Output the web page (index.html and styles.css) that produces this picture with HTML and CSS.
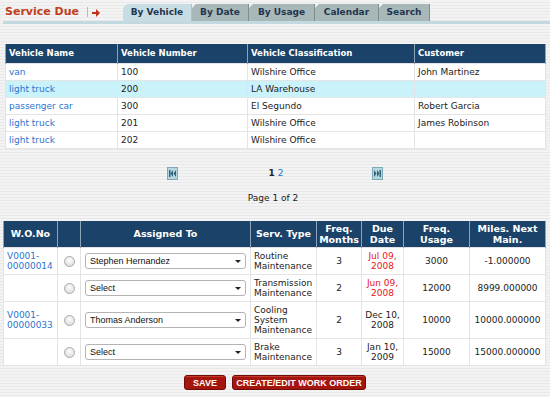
FILE: index.html
```html
<!DOCTYPE html>
<html lang="en">

<head>
  <meta charset="UTF-8">
  <title>Service Due</title>
  <link rel="stylesheet" href="styles.css">
</head>

<body>
  <div class="topbar">
    <div class="title">Service Due</div>
    <div class="sep"></div>
    <svg class="go" width="8" height="8" viewBox="0 0 8 8"><path d="M0 3h4V0l4 4-4 4V5H0z" fill="#c0301a"/></svg>
    <div class="tabs">
      <div class="tab active" style="width:69px">By Vehicle</div>
      <div class="tab" style="width:57px">By Date</div>
      <div class="tab" style="width:66px">By Usage</div>
      <div class="tab" style="width:64px">Calendar</div>
      <div class="tab" style="width:51px">Search</div>
    </div>
  </div>

  <table class="grid vehicles">
    <colgroup>
      <col style="width:112px"><col style="width:130px"><col style="width:167px"><col style="width:131px">
    </colgroup>
    <tr><th>Vehicle Name</th><th>Vehicle Number</th><th>Vehicle Classification</th><th>Customer</th></tr>
    <tr><td><a>van</a></td><td>100</td><td>Wilshire Office</td><td>John Martinez</td></tr>
    <tr class="sel"><td><a>light truck</a></td><td>200</td><td>LA Warehouse</td><td></td></tr>
    <tr><td><a>passenger car</a></td><td>300</td><td>El Segundo</td><td>Robert Garcia</td></tr>
    <tr><td><a>light truck</a></td><td>201</td><td>Wilshire Office</td><td>James Robinson</td></tr>
    <tr><td><a>light truck</a></td><td>202</td><td>Wilshire Office</td><td></td></tr>
  </table>

  <div class="pager">
    <svg class="pg" width="11" height="13" viewBox="0 0 11 13"><rect x="0.5" y="0.5" width="10" height="12" fill="#b6d7e0" stroke="#7ea9b6"/><rect x="2" y="3" width="1.5" height="7" fill="#2d6478"/><path d="M6 3L3.5 6.5 6 10zM9 3L6.5 6.5 9 10z" fill="#2d6478"/></svg>
    <div class="pages"><b>1</b> <a>2</a></div>
    <svg class="pg" width="11" height="13" viewBox="0 0 11 13"><rect x="0.5" y="0.5" width="10" height="12" fill="#b6d7e0" stroke="#7ea9b6"/><rect x="7.5" y="3" width="1.5" height="7" fill="#2d6478"/><path d="M2 3l2.5 3.5L2 10zM5 3l2.5 3.5L5 10z" fill="#2d6478"/></svg>
  </div>
  <div class="pageinfo">Page 1 of 2</div>

  <table class="grid orders">
    <colgroup>
      <col style="width:54px"><col style="width:23px"><col style="width:170px"><col style="width:66px">
      <col style="width:45px"><col style="width:42px"><col style="width:66px"><col style="width:76px">
    </colgroup>
    <tr>
      <th>W.O.No</th><th></th><th>Assigned To</th><th>Serv. Type</th>
      <th>Freq.<br>Months</th><th>Due<br>Date</th><th>Freq.<br>Usage</th><th>Miles. Next<br>Main.</th>
    </tr>
    <tr>
      <td class="left"><a>V0001-<br>00000014</a></td>
      <td><span class="radio"></span></td>
      <td><div class="dropdown">Stephen Hernandez</div></td>
      <td class="left">Routine<br>Maintenance</td>
      <td>3</td><td class="due">Jul 09,<br>2008</td><td>3000</td><td>-1.000000</td>
    </tr>
    <tr>
      <td></td>
      <td><span class="radio"></span></td>
      <td><div class="dropdown">Select</div></td>
      <td class="left">Transmission<br>Maintenance</td>
      <td>2</td><td class="due">Jun 09,<br>2008</td><td>12000</td><td>8999.000000</td>
    </tr>
    <tr>
      <td class="left"><a>V0001-<br>00000033</a></td>
      <td><span class="radio"></span></td>
      <td><div class="dropdown">Thomas Anderson</div></td>
      <td class="left">Cooling<br>System<br>Maintenance</td>
      <td>2</td><td>Dec 10,<br>2008</td><td>10000</td><td>10000.000000</td>
    </tr>
    <tr>
      <td></td>
      <td><span class="radio"></span></td>
      <td><div class="dropdown">Select</div></td>
      <td class="left">Brake<br>Maintenance</td>
      <td>3</td><td>Jan 10,<br>2009</td><td>15000</td><td>15000.000000</td>
    </tr>
  </table>

  <div class="actions">
    <button class="btn save">SAVE</button>
    <button class="btn create">CREATE/EDIT WORK ORDER</button>
  </div>
</body>

</html>
```

FILE: styles.css
```css
* {
  margin: 0;
  padding: 0;
  box-sizing: border-box;
}

body {
  font-family: "DejaVu Sans", Verdana, sans-serif;
  font-size: 9px;
  color: #222;
  width: 550px;
  height: 397px;
  overflow: hidden;
  background: repeating-linear-gradient(to bottom, #f3f3f3 0, #f3f3f3 2px, #e9e9e9 2px, #e9e9e9 3px);
}

a {
  color: #2a74d0;
}

.topbar {
  display: flex;
  align-items: flex-end;
  margin-left: 3px;
  padding-top: 4px;
  height: 24px;
  border-bottom: 3px solid #c3d9e0;
}

.title {
  font-size: 11px;
  font-weight: bold;
  color: #c0401c;
  padding: 0 0 3px 2px;
}

.sep {
  width: 1px;
  height: 10px;
  background: #b9b9b9;
  margin: 0 4px 4px 8px;
  align-self: flex-end;
}

.go {
  margin-bottom: 4px;
}

.tabs {
  display: flex;
  margin-left: 23px;
}

.tab {
  height: 17px;
  line-height: 17px;
  text-align: center;
  font-weight: bold;
  font-size: 9px;
  color: #1f3550;
  background: #a8b7b7;
  border-right: 1px solid #7f8d8d;
  clip-path: polygon(4px 0, 100% 0, 100% 100%, 0 100%, 0 4px);
}

.tab.active {
  background: #c7dce3;
  border-right-color: #aac3cb;
}

.grid {
  border-collapse: collapse;
  table-layout: fixed;
  background: #fff;
}

.grid th {
  background: #1b4268;
  color: #fff;
  font-weight: bold;
  border: 1px solid #8ea2b6;
  border-top: none;
  border-bottom: none;
}

.grid td {
  border: 1px solid #e4e4e4;
}

.vehicles {
  margin: 20px 0 0 5px;
  width: 540px;
}

.vehicles th {
  height: 19px;
  text-align: left;
  padding: 0 3px;
  font-size: 8.5px;
}

.vehicles td {
  height: 17px;
  padding: 0 3px;
}

.vehicles tr.sel td {
  background: #c9f2fb;
}

.pager {
  display: flex;
  align-items: center;
  margin: 18px 0 0 167px;
  width: 216px;
  justify-content: space-between;
}

.pages {
  font-size: 9px;
  margin-left: 2px;
}

.pageinfo {
  text-align: center;
  margin-top: 13px;
  padding-right: 4px;
}

.orders {
  margin: 18px 0 0 3px;
  width: 542px;
}

.orders th {
  height: 27px;
  line-height: 11px;
  text-align: center;
  font-size: 9.5px;
}

.orders td {
  text-align: center;
  line-height: 10px;
  padding: 3px 3px;
  height: 27px;
}

.orders td.left {
  text-align: left;
}

.orders td.due {
  color: #e8141b;
}

.radio {
  display: inline-block;
  width: 11px;
  height: 11px;
  border-radius: 50%;
  border: 1px solid #a9a9a9;
  background: radial-gradient(circle at 50% 35%, #fdfdfd, #d6d6d6);
  vertical-align: middle;
}

.dropdown {
  position: relative;
  height: 16px;
  line-height: 14px;
  text-align: left;
  padding-left: 4px;
  font-family: "Liberation Sans", Arial, sans-serif;
  font-size: 9px;
  color: #111;
  background: #fff;
  border: 1px solid #b4b4b4;
  border-radius: 3px;
  margin: 0 1px;
}

.dropdown::after {
  content: "";
  position: absolute;
  right: 4px;
  top: 6px;
  border-left: 3px solid transparent;
  border-right: 3px solid transparent;
  border-top: 3px solid #222;
}

.actions {
  display: flex;
  gap: 6px;
  margin: 9px 0 0 184px;
}

.btn {
  height: 15px;
  padding: 0;
  font-family: "Liberation Sans", Arial, sans-serif;
  font-weight: bold;
  font-size: 9px;
  color: #fff;
  background: #a5150e;
  border: 1px solid #6f0c07;
  border-radius: 3px;
  box-shadow: inset 0 1px 0 #c33a30;
}

.btn.save {
  width: 42px;
}

.btn.create {
  width: 134px;
}
```
